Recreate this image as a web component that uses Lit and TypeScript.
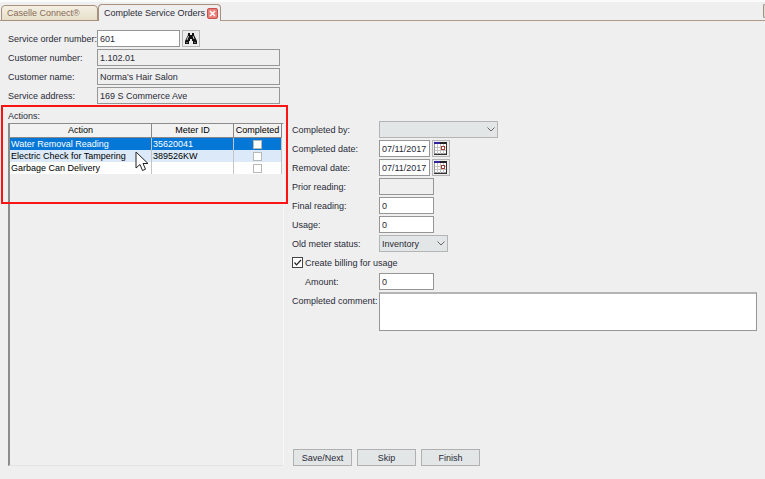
import { LitElement, html, css } from "lit";
import { customElement, state } from "lit/decorators.js";
import { classMap } from "lit/directives/class-map.js";

interface ActionRow {
  action: string;
  meter: string;
  done: boolean;
}

const calendarIcon = html`<svg width="14" height="13" viewBox="0 0 14 13" aria-hidden="true">
  <rect x="0.5" y="0.5" width="12" height="11" fill="#fff" stroke="#999" />
  <path d="M3.5 2v10M6.5 2v10M9.5 2v10M1 5.5h11M1 8.5h11" stroke="#c4c4c4" />
  <path d="M0 1h6" stroke="#3423a0" stroke-width="2" />
  <path d="M6 1h7" stroke="#222" stroke-width="2" />
  <path d="M12.5 1v12M0 12.5h13" stroke="#333" />
  <rect x="7.5" y="4.5" width="3" height="3" fill="#fff" stroke="#a0402c" />
</svg>`;

const binocularsIcon = html`<svg width="14" height="12" viewBox="0 0 14 12" aria-hidden="true">
  <path d="M4 0h2v2h2V0h2v2l2 4 1 2v3H9V8H8V6H6v2H5v3H1V8l1-2 2-4z" fill="#111" />
  <path d="M4.5 3 3 7M9 3l1 3M3 9v1M11 9v1" stroke="#ccc" fill="none" />
</svg>`;

const chevron = html`<svg class="chevron" width="8" height="5" viewBox="0 0 8 5" aria-hidden="true">
  <path d="M.5.5 4 4 7.5.5" fill="none" stroke="#666" />
</svg>`;

@customElement("app-root")
export class AppRoot extends LitElement {
  @state() private rows: ActionRow[] = [
    { action: "Water Removal Reading", meter: "35620041", done: false },
    { action: "Electric Check for Tampering", meter: "389526KW", done: false },
    { action: "Garbage Can Delivery", meter: "", done: false },
  ];
  @state() private selected = 0;

  static styles = css`
    :host {
      display: block;
      --edge: #969696;
      --face: #e3e6e6;
      --ink: #2a2a38;
      color: var(--ink);
      background: #efefef;
      font: 9px/12px "Liberation Sans", Arial, sans-serif;
    }
    * {
      box-sizing: border-box;
    }
    input,
    select,
    textarea,
    button {
      font: inherit;
      color: inherit;
      margin: 0;
      border-radius: 0;
    }
    .page {
      display: flex;
      flex-direction: column;
      min-height: 100vh;
    }
    .tabs {
      display: flex;
      align-items: flex-end;
      height: 21px;
      padding-left: 1px;
      border-top: 2px solid #fafcfc;
      box-shadow: inset 0 -1px #b09a8a;
    }
    .tab {
      display: flex;
      align-items: center;
      height: 16px;
      padding: 0 5px;
      border: 1px solid #a8907e;
      border-radius: 4px 4px 0 0;
      background: linear-gradient(#f3efe3, #e6dfc9);
      color: #8a6a58;
      white-space: nowrap;
    }
    .first {
      width: 97px;
    }
    .active {
      width: 123px;
      justify-content: space-between;
      height: 17px;
      padding-right: 2px;
      border-bottom: 0;
      background: #efefef;
      color: var(--ink);
    }
    .close {
      display: flex;
      padding: 0;
      border: 0;
      background: none;
    }
    .more {
      width: 2px;
      height: 14px;
      margin: 0 0 3px auto;
      padding: 0;
      border: 1px solid #9d8f86;
      border-right: 0;
      border-radius: 3px 0 0 3px;
      background: #e6dccf;
    }
    .body {
      flex: 1;
      display: grid;
      grid-template-columns: 276px minmax(0, 1fr);
      column-gap: 8px;
      padding: 9px 8px 13px;
    }
    .left,
    .right {
      display: flex;
      flex-direction: column;
    }
    .right {
      padding-top: 91px;
    }
    .form {
      display: grid;
      grid-template-columns: 89px minmax(0, 1fr);
      row-gap: 2px;
      align-items: center;
    }
    .right .form {
      grid-template-columns: 87px minmax(0, 1fr);
    }
    .left .form {
      padding-right: 4px;
    }
    label {
      white-space: nowrap;
    }
    .cell {
      display: flex;
      gap: 2px;
    }
    .field {
      width: 100%;
      height: 17px;
      padding: 0 2px;
      border: 1px solid var(--edge);
      background: #fff;
    }
    .field[readonly] {
      background: #efefef;
    }
    .order {
      width: 83px;
    }
    .date {
      width: 51px;
      padding-right: 0;
    }
    .number {
      width: 55px;
    }
    .icon {
      display: flex;
      align-items: center;
      justify-content: center;
      width: 18px;
      height: 17px;
      padding: 0;
      border: 1px solid #b4b4b4;
      background: #ececec;
    }
    .pick {
      position: relative;
      display: flex;
      width: 69px;
    }
    .wide {
      width: 119px;
    }
    .pick select {
      appearance: none;
      width: 100%;
      height: 17px;
      padding: 0 2px;
      border: 1px solid #b4b4b4;
      background: var(--face);
    }
    .chevron {
      position: absolute;
      right: 3px;
      top: 6px;
      pointer-events: none;
    }
    .check {
      grid-column: 1 / -1;
      display: flex;
      align-items: center;
      gap: 2px;
      height: 17px;
    }
    .tick {
      appearance: none;
      width: 11px;
      height: 11px;
      border: 1px solid #444;
      background: #fff;
    }
    .tickbox {
      position: relative;
      display: flex;
    }
    .tickbox svg {
      position: absolute;
      inset: 0;
      visibility: hidden;
      pointer-events: none;
    }
    .tick:checked + svg {
      visibility: visible;
    }
    .indent {
      padding-left: 13px;
    }
    .top {
      align-self: start;
      padding-top: 3px;
    }
    textarea.field {
      display: block;
      height: 39px;
      border-top: 2px solid #b4b4b4;
      resize: none;
    }
    .actions {
      position: relative;
      flex: 1;
      display: flex;
      flex-direction: column;
      padding-top: 6px;
    }
    .grid {
      flex: 1;
      margin-top: 1px;
      border: 1px solid #e3e3e3;
      border-top: 1px solid #8c8c8c;
      border-left: 2px solid #8c8c8c;
      border-right: 1px dotted #fff;
    }
    table {
      width: 272px;
      border-collapse: separate;
      border-spacing: 0;
      table-layout: fixed;
      color: #000;
    }
    th,
    td {
      height: 12px;
      padding: 0 1px;
      border-right: 1px solid #c4c4c4;
      text-align: left;
      font-weight: normal;
      line-height: 12px;
      white-space: nowrap;
    }
    th {
      height: 14px;
      border-right-color: #888;
      border-bottom: 1px solid #888;
      text-align: center;
      line-height: 13px;
      background: #f2f2f2;
    }
    td {
      background: #fff;
    }
    .c1 {
      width: 142px;
    }
    .c2 {
      width: 82px;
    }
    .alt td {
      background: #dce9f9;
    }
    .selected td {
      background: #0578d7;
      color: #fff;
    }
    td.mid {
      text-align: center;
    }
    .box {
      appearance: none;
      display: block;
      width: 9px;
      height: 9px;
      margin: 0 auto;
      border: 1px solid #b8b8b8;
      background: #fff;
    }
    .box:checked {
      background: #444;
    }
    .marker {
      position: absolute;
      top: 1px;
      left: -7px;
      right: -4px;
      height: 99px;
      border: 2px solid #fb1414;
      pointer-events: none;
    }
    .pointer {
      position: absolute;
      left: 127px;
      top: 47px;
      pointer-events: none;
    }
    .buttons {
      display: flex;
      gap: 5px;
      margin: auto 0 0 1px;
    }
    .push {
      width: 59px;
      height: 17px;
      padding: 0;
      border: 1px solid #b0b0b0;
      background: var(--face);
    }
  `;

  private toggle(index: number) {
    this.rows = this.rows.map((r, i) => (i === index ? { ...r, done: !r.done } : r));
  }

  private readonlyField(id: string, label: string, value: string) {
    return html`<label for=${id}>${label}</label>
      <input class="field" id=${id} .value=${value} readonly />`;
  }

  private dateField(id: string, label: string) {
    return html`<label for=${id}>${label}</label>
      <div class="cell">
        <input class="field date" id=${id} .value=${"07/11/2017"} />
        <button class="icon" aria-label="Choose date">${calendarIcon}</button>
      </div>`;
  }

  render() {
    return html`<div class="page">
      <nav class="tabs">
        <div class="tab first">Caselle Connect®</div>
        <div class="tab active">
          Complete Service Orders
          <button class="close" aria-label="Close tab">
            <svg width="11" height="11" viewBox="0 0 11 11">
              <rect x=".5" y=".5" width="10" height="10" rx="1.5" fill="#e88079" stroke="#c9504c" />
              <path d="m3 3 5 5M8 3 3 8" stroke="#fff" stroke-width="1.6" />
            </svg>
          </button>
        </div>
        <button class="more" aria-label="More tabs"></button>
      </nav>
      <main class="body">
        <section class="left">
          <div class="form">
            <label for="order">Service order number:</label>
            <div class="cell">
              <input class="field order" id="order" .value=${"601"} />
              <button class="icon" aria-label="Find">${binocularsIcon}</button>
            </div>
            ${this.readonlyField("cnum", "Customer number:", "1.102.01")}
            ${this.readonlyField("cname", "Customer name:", "Norma's Hair Salon")}
            ${this.readonlyField("addr", "Service address:", "169 S Commerce Ave")}
          </div>
          <div class="actions">
            <div>Actions:</div>
            <div class="grid">
              <table aria-label="Actions">
                <thead>
                  <tr>
                    <th class="c1">Action</th>
                    <th class="c2">Meter ID</th>
                    <th>Completed</th>
                  </tr>
                </thead>
                <tbody>
                  ${this.rows.map(
                    (r, i) => html`<tr
                      class=${classMap({ selected: i === this.selected, alt: i % 2 === 1 })}
                      @click=${() => (this.selected = i)}
                    >
                      <td>${r.action}</td>
                      <td>${r.meter}</td>
                      <td class="mid">
                        <input
                          class="box"
                          type="checkbox"
                          aria-label="Completed: ${r.action}"
                          .checked=${r.done}
                          @change=${() => this.toggle(i)}
                        />
                      </td>
                    </tr>`
                  )}
                </tbody>
              </table>
            </div>
            <div class="marker"></div>
            <svg class="pointer" width="14" height="21" viewBox="0 0 14 21" aria-hidden="true">
              <path d="M1 1v16l4-3.5 2.5 6 3-1.3L8 12.5h5z" fill="#fff" stroke="#222" />
            </svg>
          </div>
        </section>
        <section class="right">
          <div class="form">
            <label for="by">Completed by:</label>
            <div class="pick wide">
              <select id="by"><option></option></select>${chevron}
            </div>
            ${this.dateField("cdate", "Completed date:")} ${this.dateField("rdate", "Removal date:")}
            <label for="prior">Prior reading:</label>
            <input class="field number" id="prior" readonly />
            <label for="final">Final reading:</label>
            <input class="field number" id="final" .value=${"0"} />
            <label for="usage">Usage:</label>
            <input class="field number" id="usage" .value=${"0"} />
            <label for="status">Old meter status:</label>
            <div class="pick">
              <select id="status"><option>Inventory</option></select>${chevron}
            </div>
            <label class="check">
              <span class="tickbox">
                <input class="tick" type="checkbox" checked />
                <svg width="11" height="11" viewBox="0 0 11 11" aria-hidden="true">
                  <path d="m2.5 5.5 2 2.3L9 3" fill="none" stroke="#222" stroke-width="1.2" />
                </svg>
              </span>
              Create billing for usage
            </label>
            <label class="indent" for="amount">Amount:</label>
            <input class="field number" id="amount" .value=${"0"} />
            <label class="top" for="comment">Completed comment:</label>
            <textarea class="field" id="comment"></textarea>
          </div>
          <div class="buttons">
            <button class="push">Save/Next</button>
            <button class="push">Skip</button>
            <button class="push">Finish</button>
          </div>
        </section>
      </main>
    </div>`;
  }
}
